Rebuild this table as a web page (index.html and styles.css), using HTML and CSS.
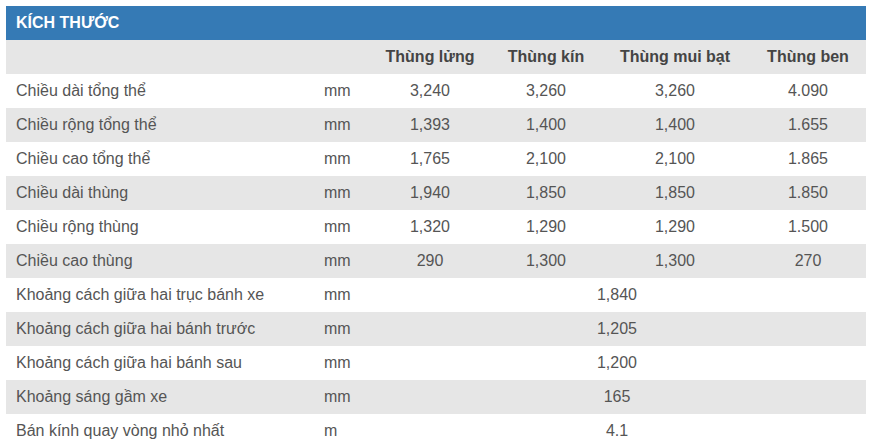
FILE: index.html
```html
<!DOCTYPE html>
<html lang="vi">
<head>
<meta charset="utf-8">
<title>Kích thước</title>
<link rel="stylesheet" href="styles.css">
</head>
<body>
<div class="panel">
  <div class="panel-title">KÍCH THƯỚC</div>
  <table class="spec">
    <colgroup>
      <col class="c-label"><col class="c-unit"><col class="c-1"><col class="c-2"><col class="c-3"><col class="c-4">
    </colgroup>
    <thead>
      <tr><th></th><th></th><th>Thùng lửng</th><th>Thùng kín</th><th>Thùng mui bạt</th><th>Thùng ben</th></tr>
    </thead>
    <tbody>
      <tr><td>Chiều dài tổng thể</td><td>mm</td><td>3,240</td><td>3,260</td><td>3,260</td><td>4.090</td></tr>
      <tr><td>Chiều rộng tổng thể</td><td>mm</td><td>1,393</td><td>1,400</td><td>1,400</td><td>1.655</td></tr>
      <tr><td>Chiều cao tổng thể</td><td>mm</td><td>1,765</td><td>2,100</td><td>2,100</td><td>1.865</td></tr>
      <tr><td>Chiều dài thùng</td><td>mm</td><td>1,940</td><td>1,850</td><td>1,850</td><td>1.850</td></tr>
      <tr><td>Chiều rộng thùng</td><td>mm</td><td>1,320</td><td>1,290</td><td>1,290</td><td>1.500</td></tr>
      <tr><td>Chiều cao thùng</td><td>mm</td><td>290</td><td>1,300</td><td>1,300</td><td>270</td></tr>
      <tr><td>Khoảng cách giữa hai trục bánh xe</td><td>mm</td><td colspan="4">1,840</td></tr>
      <tr><td>Khoảng cách giữa hai bánh trước</td><td>mm</td><td colspan="4">1,205</td></tr>
      <tr><td>Khoảng cách giữa hai bánh sau</td><td>mm</td><td colspan="4">1,200</td></tr>
      <tr><td>Khoảng sáng gầm xe</td><td>mm</td><td colspan="4">165</td></tr>
      <tr><td>Bán kính quay vòng nhỏ nhất</td><td>m</td><td colspan="4">4.1</td></tr>
    </tbody>
  </table>
</div>
</body>
</html>
```

FILE: styles.css
```css
html, body {
  margin: 0;
  padding: 0;
  background: #fff;
}
.panel {
  padding: 6px;
  width: 860px;
  font-family: "Liberation Sans", Arial, sans-serif;
}
.panel-title {
  background: #357ab5;
  color: #fff;
  font-weight: bold;
  font-size: 16px;
  height: 34px;
  line-height: 34px;
  padding: 0 10px;
  box-sizing: border-box;
}
.spec {
  width: 860px;
  border-collapse: collapse;
  table-layout: fixed;
  font-size: 16px;
  color: #555;
}
.c-label { width: 308px; }
.c-unit { width: 54px; }
.c-1 { width: 124px; }
.c-2 { width: 108px; }
.c-3 { width: 150px; }
.c-4 { width: 116px; }
.spec th, .spec td {
  height: 34px;
  padding: 0 10px;
  vertical-align: middle;
  text-align: center;
  white-space: nowrap;
}
.spec th {
  background: #e6e6e6;
  color: #444;
  font-weight: bold;
}
.spec td:first-child, .spec td:nth-child(2) {
  text-align: left;
}
.spec tbody tr:nth-child(even) td {
  background: #e6e6e6;
}
```
